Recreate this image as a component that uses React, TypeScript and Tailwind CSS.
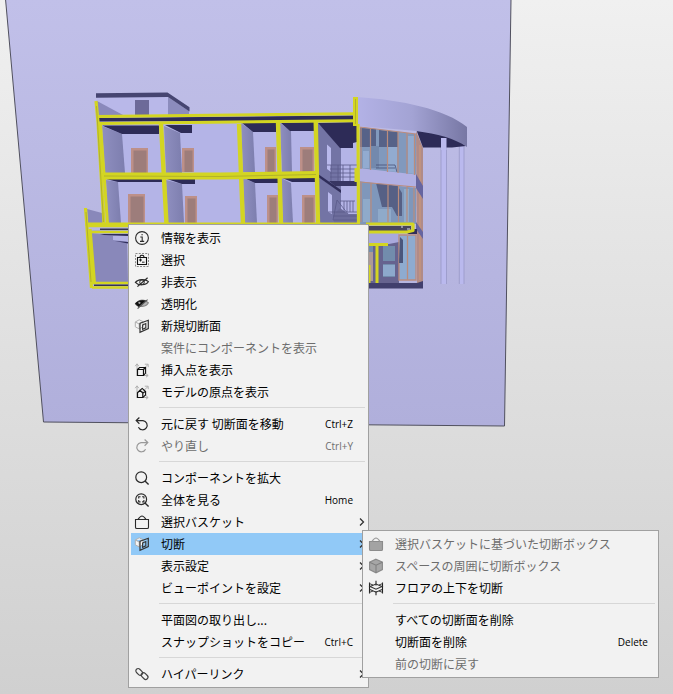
import React from 'react';

type MenuEntry = {
  label: string;
  icon?: React.ReactNode;
  shortcut?: string;
  disabled?: boolean;
  active?: boolean;
  submenu?: boolean;
};

const Icon = ({ children }: { children?: React.ReactNode }) => (
  <svg viewBox="1 1 14 14" className="mx-px h-[14px] w-[14px] shrink-0 overflow-visible" fill="none" stroke="#2a2a2a" strokeWidth="1.1" aria-hidden="true">
    {children}
  </svg>
);

const InfoIcon = () => (
  <Icon>
    <circle cx="8" cy="8" r="6.4" />
    <path d="M6.3 7H8.2V11.3M6 11.4H10.2M7.4 4.7H8.8" />
  </Icon>
);

const SelectIcon = () => (
  <Icon>
    <rect x="1.5" y="1.5" width="13" height="13" stroke="#8a8a8a" strokeDasharray="2 1.25" strokeWidth="1" />
    <path d="M3.5 5.5H12.5V12.5H3.5ZM6 5C6 3.6 7 3.3 8 3.3S10 3.6 10 5" stroke="#111" strokeWidth="1.1" />
    <path d="M5 8H8M6.5 6.5V9.5M8 10.2H10.6" stroke="#111" strokeWidth="0.9" />
  </Icon>
);

const HideIcon = () => (
  <Icon>
    <path d="M1.4 8.4C4 5 11.5 4.6 14.4 7.6C12.5 11.4 4.5 12 1.4 8.4Z" strokeWidth="1.2" />
    <circle cx="8" cy="8.2" r="2.3" strokeWidth="1" />
    <path d="M3.4 12.6L13.6 3.8" strokeWidth="1.2" />
  </Icon>
);

const TransparentIcon = () => (
  <Icon>
    <path d="M1.4 7.8C4 4 11.5 3.6 14.4 6.8C12.5 11.2 4.5 11.6 1.4 7.8Z" stroke="#888" fill="#b4b4b4" />
    <path d="M1.4 7.8C3.6 4.2 8.5 3.4 11.6 4.8L4.6 10.8Z" fill="#111" stroke="#111" strokeWidth="0.6" />
    <circle cx="5.4" cy="6.8" r="1.1" fill="#aaa" stroke="none" />
    <path d="M3.6 12.6L13.6 3.6" stroke="#555" />
  </Icon>
);

const SectionIcon = () => (
  <Icon>
    <path d="M1.3 4L5.2 1.8L9 3.6V8.6L5.4 11L1.3 8.8ZM1.3 4L5.2 6L9 3.6M5.2 6V11" fill="#f6f6f6" stroke="#b0b0b0" strokeWidth="1" />
    <path d="M6 5.3L14.3 2.3V10.6L6 14.3Z" stroke="#333" strokeWidth="1.2" />
    <path d="M8.6 6.9L11.8 5.5V9.8L8.6 11.3Z" stroke="#333" strokeWidth="1.1" />
  </Icon>
);

const Axes = () => (
  <path
    d="M3 14V2M1.2 4.2L3 1.8L4.8 4.2M3 13.5H14M12 11.6L14.2 13.5L12 15.2M5 11L14 2.5M10.8 2.2H14.2V5.2"
    stroke="#b0b0b0"
    strokeWidth="1"
  />
);

const InsertIcon = () => (
  <Icon>
    <Axes />
    <path d="M3.5 7.5H9.5V13.5H3.5Z" fill="#f2f2f2" stroke="#111" strokeWidth="1.2" />
    <path d="M3.5 7.5L5.6 5.5H11.6V11L9.5 13.5M9.5 7.5L11.6 5.5" stroke="#111" strokeWidth="1.1" />
  </Icon>
);

const OriginIcon = () => (
  <Icon>
    <Axes />
    <path d="M3.5 8.8L6 6.4L8.8 9V13.5H3.5Z" fill="#f2f2f2" stroke="#111" strokeWidth="1.2" />
    <path d="M6 6.4L8.2 4.4L11.6 7.6V11L8.8 13.4M8.8 9L11.6 7.6" stroke="#111" strokeWidth="1.1" />
  </Icon>
);

const UndoIcon = () => (
  <Icon>
    <path d="M5.4 1.5L2.2 4.6L5.4 7.7M2.4 4.6H9A4.6 4.6 0 1 1 4.4 11.2" strokeWidth="1.2" />
  </Icon>
);

const RedoIcon = () => (
  <Icon>
    <path d="M10.6 1.5L13.8 4.6L10.6 7.7M13.6 4.6H7A4.6 4.6 0 1 0 11.6 11.2" stroke="#999" strokeWidth="1.2" />
  </Icon>
);

const ZoomIcon = ({ fit = false }: { fit?: boolean }) => (
  <Icon>
    <circle cx="7.2" cy="7.2" r="5.4" strokeWidth="1.2" />
    <path d="M11 11L14.6 14.4" strokeWidth="1.4" />
    {fit && <path d="M4.7 6.5V4.7H6.5M8.1 4.7H9.9V6.5M9.9 8.1V9.9H8.1M6.5 9.9H4.7V8.1" strokeWidth="1.1" />}
  </Icon>
);

const BasketIcon = ({ filled = false }: { filled?: boolean }) => (
  <Icon>
    <path
      d="M1.5 5.5H14.5V13.2Q14.5 14.5 13.2 14.5H2.8Q1.5 14.5 1.5 13.2Z"
      fill={filled ? '#a3a3a3' : 'none'}
      stroke={filled ? '#8c8c8c' : '#2a2a2a'}
      strokeWidth="1.1"
    />
    <path d="M4 5.4C5.4 3.4 6.6 2 8 2S10.6 3.4 12 5.4" stroke={filled ? '#999' : '#2a2a2a'} />
  </Icon>
);

const LinkIcon = () => (
  <Icon>
    <rect x="1.4" y="3.6" width="7.6" height="4.6" rx="2.3" transform="rotate(45 5.2 5.9)" stroke="#444" strokeWidth="1.2" />
    <rect x="6.8" y="7.8" width="7.6" height="4.6" rx="2.3" transform="rotate(45 10.6 10.1)" stroke="#444" strokeWidth="1.2" />
  </Icon>
);

const BoxIcon = () => (
  <Icon>
    <path d="M8 1.2L14.4 4.2V11.6L8 14.8L1.6 11.6V4.2Z" fill="#a6a6a6" stroke="#8a8a8a" />
    <path d="M1.6 4.2L8 7.2L14.4 4.2M8 7.2V14.8" stroke="#808080" />
  </Icon>
);

const FloorCutIcon = () => (
  <Icon>
    <path d="M1.5 2.4V13.6M14.5 2.4V13.6M8 0.8V5.4M8 11V15.2" stroke="#222" strokeWidth="1.1" />
    <path d="M1.5 3.6L5 5M14.5 3.6L11 5M1.5 12.4L5 11M14.5 12.4L11 11" stroke="#444" strokeWidth="1" />
    <path d="M2 6.6L8 4L14 6.6L8 9.2ZM2 9.6L8 12.2L14 9.6" stroke="#333" strokeWidth="1.1" />
  </Icon>
);

const mainMenu: MenuEntry[][] = [
  [
    { label: '情報を表示', icon: <InfoIcon /> },
    { label: '選択', icon: <SelectIcon /> },
    { label: '非表示', icon: <HideIcon /> },
    { label: '透明化', icon: <TransparentIcon /> },
    { label: '新規切断面', icon: <SectionIcon /> },
    { label: '案件にコンポーネントを表示', disabled: true },
    { label: '挿入点を表示', icon: <InsertIcon /> },
    { label: 'モデルの原点を表示', icon: <OriginIcon /> },
  ],
  [
    { label: '元に戻す 切断面を移動', icon: <UndoIcon />, shortcut: 'Ctrl+Z' },
    { label: 'やり直し', icon: <RedoIcon />, shortcut: 'Ctrl+Y', disabled: true },
  ],
  [
    { label: 'コンポーネントを拡大', icon: <ZoomIcon /> },
    { label: '全体を見る', icon: <ZoomIcon fit />, shortcut: 'Home' },
    { label: '選択バスケット', icon: <BasketIcon />, submenu: true },
    { label: '切断', icon: <SectionIcon />, submenu: true, active: true },
    { label: '表示設定', submenu: true },
    { label: 'ビューポイントを設定', submenu: true },
  ],
  [
    { label: '平面図の取り出し...' },
    { label: 'スナップショットをコピー', shortcut: 'Ctrl+C' },
  ],
  [{ label: 'ハイパーリンク', icon: <LinkIcon />, submenu: true }],
];

const cutMenu: MenuEntry[][] = [
  [
    { label: '選択バスケットに基づいた切断ボックス', icon: <BasketIcon filled />, disabled: true },
    { label: 'スペースの周囲に切断ボックス', icon: <BoxIcon />, disabled: true },
    { label: 'フロアの上下を切断', icon: <FloorCutIcon /> },
  ],
  [
    { label: 'すべての切断面を削除' },
    { label: '切断面を削除', shortcut: 'Delete' },
    { label: '前の切断に戻す', disabled: true },
  ],
];

const MenuItem = ({ item, shortcutPad }: { item: MenuEntry; shortcutPad: string }) => (
  <button
    type="button"
    role="menuitem"
    disabled={item.disabled}
    aria-haspopup={item.submenu ? 'menu' : undefined}
    className={`flex h-[22px] w-full items-center pl-[3px] text-left text-[12px] leading-[22px] ${
      item.active ? 'bg-[#91c9f7]' : ''
    } ${item.disabled ? 'text-[#6d6d6d]' : 'text-black'}`}
  >
    {item.icon ?? <Icon />}
    <span className="ml-[11px] flex-1 whitespace-nowrap">{item.label}</span>
    {item.shortcut && (
      <span className={`font-['Open_Sans',sans-serif] text-[10px] ${shortcutPad}`}>{item.shortcut}</span>
    )}
    {item.submenu && (
      <svg viewBox="0 0 6 10" className="mr-px h-[10px] w-[6px]" fill="none" stroke="#333" strokeWidth="1.3" aria-hidden="true">
        <path d="M1 1.5L4.5 5L1 8.5" />
      </svg>
    )}
  </button>
);

const Menu = ({ groups, label, shortcutPad }: { groups: MenuEntry[][]; label: string; shortcutPad: string }) => (
  <div
    role="menu"
    aria-label={label}
    className="border border-[#a0a0a0] bg-[#f2f2f2] p-[2px]"
  >
    {groups.map((group, i) => (
      <div key={i}>
        {i > 0 && <div role="separator" className="mt-1 mb-[5px] ml-7 mr-px h-px bg-[#d7d7d7]" />}
        {group.map((item) => (
          <MenuItem key={item.label} item={item} shortcutPad={shortcutPad} />
        ))}
      </div>
    ))}
  </div>
);

const Door = ({ x, y, w, h }: { x: number; y: number; w: number; h: number }) => (
  <g>
    <rect x={x} y={y} width={w} height={h} fill="#bd9089" />
    <rect x={x + 2.5} y={y + 2.5} width={w - 4} height={h - 2.5} fill="#9d7d7b" />
  </g>
);

const Building = () => (
  <svg
    viewBox="0 0 673 694"
    preserveAspectRatio="xMinYMin meet"
    className="absolute inset-0 h-full w-full"
    role="img"
    aria-label="建物の断面"
  >
    <defs>
      <linearGradient id="plane" x1="0" y1="0" x2="0" y2="1">
        <stop offset="0" stopColor="#c1c0e9" />
        <stop offset="1" stopColor="#b0afdb" />
      </linearGradient>
      <linearGradient id="fascia" x1="0" y1="0" x2="1" y2="0">
        <stop offset="0" stopColor="#b3b2e6" />
        <stop offset="0.5" stopColor="#a3a3d4" />
        <stop offset="1" stopColor="#7777a4" />
      </linearGradient>
      <linearGradient id="wall" x1="0" y1="0" x2="1" y2="0">
        <stop offset="0" stopColor="#8f8fc0" />
        <stop offset="1" stopColor="#7d7eae" />
      </linearGradient>
    </defs>

    {/* cutting plane */}
    <path d="M5.5 -1L43.5 422L504.5 426L511 -1Z" fill="url(#plane)" stroke="#50505e" strokeWidth="1" />

    {/* roof house */}
    <path d="M97 97H168V116H97Z" fill="#b9b8e9" />
    <path d="M168 97L189 111V116H168Z" fill="#8c8cbd" />
    <path d="M97 101L123 115H98Z" fill="#8a89bb" />
    <rect x="135" y="100" width="14" height="15" fill="#6d6a99" />
    <path d="M96 93.3L167.5 92.5L189.5 107.3V111.5L168 97L96 97.7Z" fill="#464571" />

    {/* interior */}
    <path d="M98 118L356 117L358 224H105Z" fill="#b4b4e7" />
    <path d="M98 118L354 115.5V120.5L98 121.5Z" fill="#2d2b57" />
    <path d="M91 230H130V236H92Z" fill="#a9a8da" />
    <path d="M91 233L127 237L128 283H94Z" fill="#8988ba" />
    <path d="M113 236H130V242L113 240Z" fill="#b4b3e5" />
    <path d="M100 234H128V236L104 235ZM115 241L128 242V243.5Z" fill="#302e5c" />
    <path d="M87 209L102 213L103 223H88Z" fill="#8988ba" />

    {/* side walls */}
    <g fill="url(#wall)">
      <path d="M102 126L122 134L125 173H105Z" />
      <path d="M164 126L180 133L182 173H166Z" />
      <path d="M106 180L118 182L121 223H108Z" />
      <path d="M166 180L182 184L184 223H168Z" />
      <path d="M241 123L253 132L255 172H243Z" />
      <path d="M280 123L291 131L292 172H282Z" />
      <path d="M243 178L255 183L257 223H245Z" />
      <path d="M281 178L291 183L293 223H283Z" />
    </g>

    {/* ceilings */}
    <g fill="#2d2b57">
      <path d="M102 125.5H159V134H122Z" />
      <path d="M165 125H192V133H181Z" />
      <path d="M106 179H162V182H118Z" />
      <path d="M167 179H195V184H182Z" />
      <path d="M242 123H276V132H253Z" />
      <path d="M281 123L314 122V131H290Z" />
      <path d="M244 178H278V183H255Z" />
      <path d="M282 178L315 177V182H292Z" />
    </g>

    <Door x={131} y={148} w={17} h={25} />
    <Door x={182} y={148} w={12} h={24} />
    <Door x={128} y={194} w={17} h={29} />
    <Door x={185} y={196} w={12} h={27} />
    <Door x={265} y={147} w={11} h={25} />
    <Door x={300} y={147} w={14} h={25} />
    <Door x={267} y={195} w={11} h={28} />
    <Door x={302} y={195} w={13} h={28} />

    {/* stairwell */}
    <path d="M318 123L341 148V192L318 175Z" fill="#7374a5" />
    <path d="M318 177L341 192V224H318Z" fill="#7374a5" />
    <path d="M318 123L357 122V142L353 143V148H340Z" fill="#2d2b57" />
    <path d="M327 144.5L331 148V172L327 169ZM328 192L332 195V214L328 212Z" fill="#b9b9ec" />
    <path d="M318 174L341 190V193L318 177Z" fill="#2f2d5a" />
    <path d="M329 181H357V186H335Z" fill="#383663" />
    <path d="M340 208L348 214H357V224H334V214Z" fill="#6d6d9c" />
    <g stroke="#5b5a8a" strokeWidth="0.8" fill="none">
      <path d="M327 165H357M330 169H357M330 173H357M330 177H357M331 165V181M338 165V181M343 165V181M350 165V181" />
      <path d="M333 220L337 200L348 214M340 201H355M344 201V212M347 201V212M350 201V212M353 201V212M328 212H357M333 216H357M333 220H357" />
    </g>

    {/* canopy posts */}
    <path d="M441 138H446.5V284H441ZM459.5 146H464V284H459.5Z" fill="#bab9ee" />
    <path d="M441 138V284M446.5 138V284M459.3 146V284M464 146V284" stroke="#9b9bc9" strokeWidth="0.9" />

    {/* curtain wall */}
    <path d="M360 127L416 134V176L360 170Z" fill="#8199bd" />
    <path d="M360 128L376 129V147H360ZM379 130L398 132V147H379Z" fill="#566288" />
    <path d="M363 151H369V168H363ZM388 147H397V172L388 171ZM408 136H414V174L408 173Z" fill="#92abd0" />
    <path d="M370 146H379V168H370Z" fill="#7389ad" />
    <path d="M376 165H395L397 172M376 168H395" stroke="#3e456d" strokeWidth="0.7" fill="none" />
    <path d="M360 181L416 187V224H360Z" fill="#7f97bb" />
    <path d="M376 183L397 185L402 193V216H397L392 207H382Z" fill="#566085" />
    <path d="M363 199H370V222H363ZM378 209H391V222H378ZM404 189H409V222H404Z" fill="#8faaca" />
    <path d="M358 168L416 174.5V188L358 181Z" fill="#b1b0e3" />
    <path d="M416 131L423 148V288H417Z" fill="#b18b87" />
    <path d="M420 145V280" stroke="#ce9979" strokeWidth="1" />
    <path d="M416 174L423 186V199L416 188ZM416 222L423 232V239L416 229Z" fill="#6665a0" />
    <g stroke="#ba8c7d" strokeWidth="1.2" fill="none">
      <path d="M361 127V169M370.5 128.5V170M387.5 130.5V172M398 132V173M407 133V174M414.5 134V175" />
      <path d="M361 182V222M371 183V222M388 184V222M398.5 185V222M407 186V222M414 187V222M360 127L416 134M360 182L416 187" />
    </g>

    {/* canopy */}
    <path d="M416 129Q450 132 466 146L452 147.5H423Z" fill="#2d2b57" />
    <path d="M441 138H446.5V150H441Z" fill="#bab9ee" />
    <path d="M357 97C402 100 445 109 467 127V147C454 138 438 134 416 131C398 129 378 128 357 126Z" fill="url(#fascia)" />

    {/* entrance */}
    <path d="M366 233H399V283H366Z" fill="#a9a9dc" />
    <path d="M366 248L375 243L389 244L399 242V284H366Z" fill="#66638f" />
    <path d="M368 246H373V263H368ZM383 246H395V261H383ZM383 264H395V277H383Z" fill="#728cac" />
    <path d="M383 265H395V276H383Z" fill="#8da9cc" />
    <path d="M368 252H373V281H368Z" fill="#ae9a96" />
    <path d="M399 235H416V280H399Z" fill="#8eabd0" stroke="#ba8c7d" strokeWidth="1.3" />
    <path d="M407.5 236V280" stroke="#ba8c7d" strokeWidth="1.3" />
    <path d="M400 237L403 240V263H399Z" fill="#4a557b" />
    <path d="M366 283H417L423 281V288.5H366Z" fill="#413f6d" />

    {/* lower slab */}
    <path d="M366 226H411V231H366Z" fill="#48455f" />
    <path d="M401 227H403M407 229H410" stroke="#dedeed" strokeWidth="1" />
    <path d="M414 229H417V234H407Z" fill="#302e5a" />

    {/* cut edges */}
    <g stroke="#d3d522" fill="none" strokeLinejoin="round">
      <path d="M96 101L98 122L104 224" strokeWidth="3.2" />
      <path d="M100.5 124L107.5 224" strokeWidth="3" />
      <path d="M97 116.5L354 113.8M98 123.5L354 120.7" strokeWidth="3" />
      <path d="M161 124L166.5 224M239 124L243 224M278 122L281 224M315.7 121L318 224" strokeWidth="4.4" />
      <path d="M102 176L220 176L318 174.5" strokeWidth="7" />
      <path d="M355.5 97V126" strokeWidth="5" />
      <path d="M358 124L358.5 224" strokeWidth="3.2" />
      <path d="M356.5 168V182" strokeWidth="4" />
      <path d="M85 224H359" strokeWidth="3" />
      <path d="M85.5 208L91.5 288M90 229L94.5 284" strokeWidth="3.2" />
      <path d="M87 226H130M89 232H130M92 283H130M92 287.5H130" strokeWidth="2.6" />
      <path d="M366 224H413V230.5L407 232H366" strokeWidth="3.2" />
      <path d="M366 244.5H388M377 244V283M369 265V283" strokeWidth="3" />
    </g>
    <path d="M100 229.2H130M94 285.3H130" stroke="#37354f" strokeWidth="1.4" />
    <path d="M104 176L220 176.5L316 174.5M96.5 106L103.5 222M355.5 99V124M86 212L91 282" stroke="#a3a32c" strokeWidth="0.7" fill="none" />
  </svg>
);

const App = () => {
  return (
    <main className="relative min-h-screen overflow-hidden bg-gradient-to-b from-[#f0f0f0] to-[#d0d0d0] font-['Noto_Sans_CJK_JP',sans-serif]">
      <Building />

      <div className="absolute left-[128px] top-[224px] w-[241px]">
        <Menu groups={mainMenu} label="コンテキストメニュー" shortcutPad="mr-[13px]" />
      </div>

      {/* submenu of 切断 */}
      <div className="absolute left-[362px] top-[530px] w-[297px]">
        <Menu groups={cutMenu} label="切断" shortcutPad="mr-2" />
      </div>
    </main>
  );
};

export default App;
